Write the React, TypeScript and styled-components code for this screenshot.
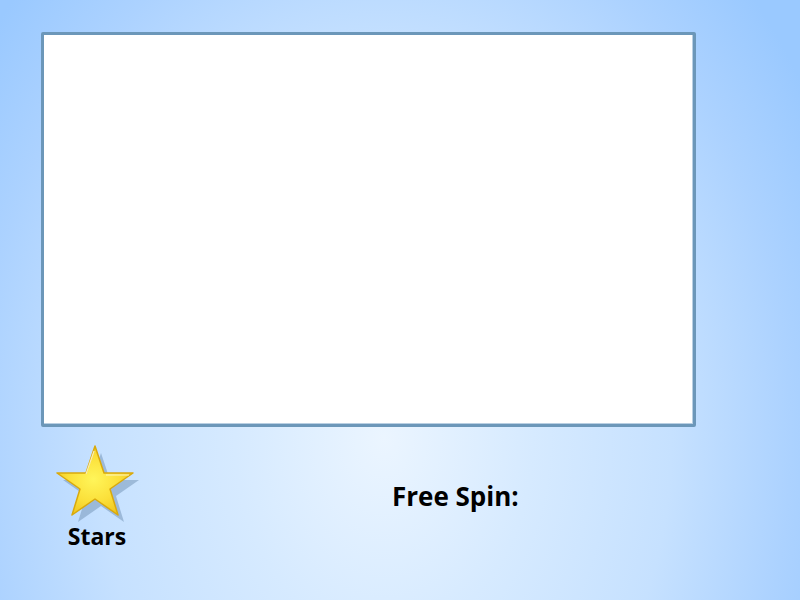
import React from "react";
import styled, { createGlobalStyle } from "styled-components";

const GlobalStyle = createGlobalStyle`
  html, body {
    margin: 0;
    padding: 0;
  }
  body {
    font-family: "Open Sans", "Noto Sans", sans-serif;
  }
`;

const Stage = styled.div`
  width: 800px;
  height: 600px;
  box-sizing: border-box;
  padding: 32px 104px 0 41px;
  display: flex;
  flex-direction: column;
  background: radial-gradient(
    ellipse 62% 110% at 48% 73%,
    #ebf5ff 0%,
    #d6eaff 30%,
    #c6e1ff 58%,
    #acd2ff 82%,
    #9ac9ff 100%
  );
  overflow: hidden;
`;

const Board = styled.div`
  width: 655px;
  height: 395px;
  box-sizing: border-box;
  background: #fff;
  border: 3px solid #6c97b9;
  border-radius: 2px;
  box-shadow: inset -1px -1px 0 #b9cfe2;
`;

const InfoRow = styled.div`
  display: flex;
  align-items: flex-start;
  padding-top: 17px;
`;

const StarBadge = styled.div`
  width: 90px;
  margin-left: 12px;
  display: flex;
  flex-direction: column;
  align-items: center;
`;

const StarLabel = styled.span`
  margin-top: -3px;
  margin-left: -2px;
  font-size: 23px;
  font-weight: 700;
  color: #000;
  line-height: 30px;
`;

const SpinLabel = styled.span`
  margin-left: 249px;
  margin-top: 34px;
  font-size: 26px;
  font-weight: 700;
  color: #000;
  line-height: 36px;
`;

const StarIcon = () => (
  <svg width="90" height="80" viewBox="0 0 90 80">
    <defs>
      <radialGradient id="starFill" cx="48%" cy="48%" r="60%">
        <stop offset="0%" stopColor="#fff55a" />
        <stop offset="55%" stopColor="#fbe03a" />
        <stop offset="100%" stopColor="#eec21a" />
      </radialGradient>
    </defs>
    <polygon
      points="48,9 57,36 86,36 63,52 71,78 48,62 25,78 33,52 10,36 39,36"
      fill="#7f9fbf"
      opacity="0.6"
    />
    <polygon
      points="42,2 51,29 80,29 57,45 65,71 42,55 19,71 27,45 4,29 33,29"
      fill="url(#starFill)"
      stroke="#d9a90c"
      strokeWidth="1.5"
      strokeLinejoin="round"
    />
    <path
      d="M41,7 L33,30 M53,31 L76,31"
      stroke="#fffbe0"
      strokeWidth="1.2"
      opacity="0.8"
    />
  </svg>
);

export default function App() {
  return (
    <>
      <GlobalStyle />
      <Stage>
        <Board />
        <InfoRow>
          <StarBadge>
            <StarIcon />
            <StarLabel>Stars</StarLabel>
          </StarBadge>
          <SpinLabel>Free Spin:</SpinLabel>
        </InfoRow>
      </Stage>
    </>
  );
}
